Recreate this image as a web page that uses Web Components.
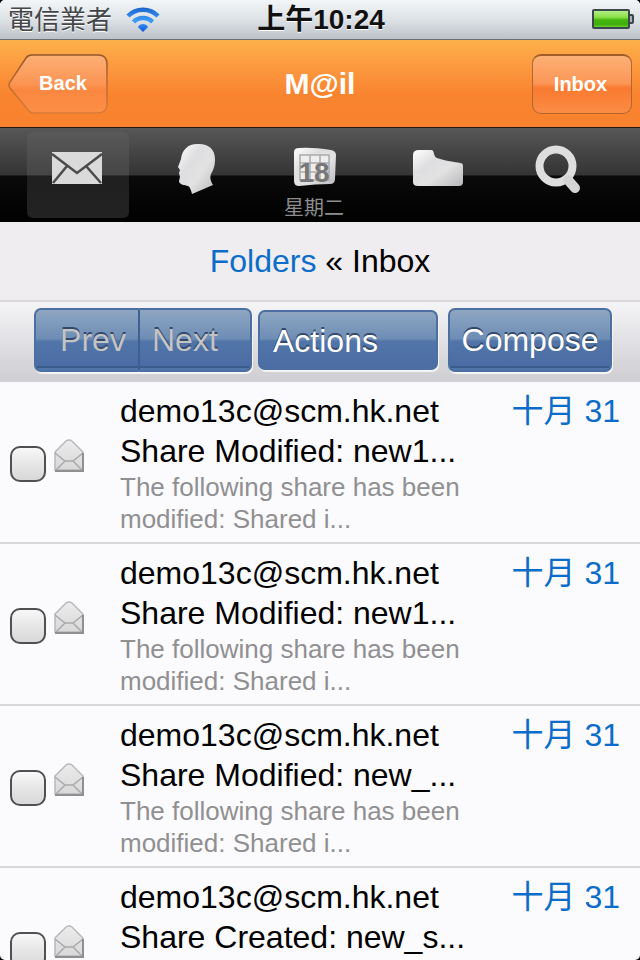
<!DOCTYPE html>
<html lang="zh-Hant">
<head>
<meta charset="utf-8">
<meta name="viewport" content="width=device-width, initial-scale=1">
<title>M@il</title>
<style>
  body {
    margin: 0;
    background: #000;
    font-family: "Liberation Sans", Arial, "Noto Sans CJK TC", sans-serif;
  }
</style>
</head>
<body>

<mail-app>
  <status-bar carrier="電信業者" time="上午10:24"></status-bar>
  <title-bar heading="M@il">
    <nav-button slot="left" shape="arrow">Back</nav-button>
    <nav-button slot="right">Inbox</nav-button>
  </title-bar>
  <tab-bar></tab-bar>
  <folder-path folder="Inbox"></folder-path>
  <tool-bar></tool-bar>
  <message-list slot="content">
    <message-row sender="demo13c@scm.hk.net" subject="Share Modified: new1..." date="十月 31">The following share has been modified: Shared i...</message-row>
    <message-row sender="demo13c@scm.hk.net" subject="Share Modified: new1..." date="十月 31">The following share has been modified: Shared i...</message-row>
    <message-row sender="demo13c@scm.hk.net" subject="Share Modified: new_..." date="十月 31">The following share has been modified: Shared i...</message-row>
    <message-row sender="demo13c@scm.hk.net" subject="Share Created: new_s..." date="十月 31"></message-row>
  </message-list>
</mail-app>

<script>
class MailElement extends HTMLElement {
  constructor() {
    super();
    this.attachShadow({ mode: "open" });
  }

  connectedCallback() {
    this.shadowRoot.innerHTML = /* html */`
      <style>
        * { box-sizing: border-box; }
        ${this.constructor.styles}
      </style>
      ${this.template()}
    `;
  }
}

class MailApp extends MailElement {
  static get styles() {
    return /* css */`
      :host {
        display: flex;
        flex-direction: column;
        height: 100vh;
        overflow: hidden;
        border-radius: 5px;
        background: #fbfafc;
      }
      ::slotted([slot="content"]) {
        flex: 1;
        min-height: 0;
      }
    `;
  }

  template() {
    return /* html */`<slot></slot><slot name="content"></slot>`;
  }
}

class StatusBar extends MailElement {
  static get styles() {
    return /* css */`
      :host {
        display: grid;
        grid-template-columns: 1fr auto 1fr;
        align-items: center;
        box-sizing: border-box;
        height: 40px;
        padding: 0 6px 0 8px;
        background: linear-gradient(#f3f6f8, #dde2e6 50%, #bcc3c8);
        border-bottom: 1px solid #6a6f70;
      }
      .carrier {
        display: flex;
        align-items: center;
        gap: 14px;
        font-size: 26px;
        line-height: 38px;
        color: #444649;
        text-shadow: 0 1px 0 #fff;
      }
      time {
        font-size: 28px;
        font-weight: bold;
        line-height: 38px;
        color: #111;
        text-shadow: 0 1px 0 #fff;
      }
      .battery { justify-self: end; }
      svg { display: block; }
    `;
  }

  template() {
    return /* html */`
      <div class="carrier">
        <span>${this.getAttribute("carrier")}</span>
        <svg width="34" height="26" viewBox="0 0 34 26" role="img" aria-label="Wi-Fi">
          <defs>
            <linearGradient id="wave" x1="0" y1="0" x2="0" y2="26" gradientUnits="userSpaceOnUse">
              <stop offset="0" stop-color="#1a62cc"/>
              <stop offset=".55" stop-color="#3f9df8"/>
              <stop offset="1" stop-color="#0b50dc"/>
            </linearGradient>
          </defs>
          <g fill="none" stroke="url(#wave)" stroke-width="4.500">
            <path d="M2 9a21.200 21.200 0 0 1 30 0"/>
            <path d="M7.500 15a13.400 13.400 0 0 1 19 0"/>
          </g>
          <path fill="url(#wave)" d="M17 25l-4.600-4.600a3.500 3.500 0 0 1 0-1.500 6.500 6.500 0 0 1 9.200 0 3.500 3.500 0 0 1 0 1.500z"/>
        </svg>
      </div>
      <time>${this.getAttribute("time")}</time>
      <svg class="battery" width="42" height="22" viewBox="0 0 42 22" role="img" aria-label="Battery">
        <defs>
          <linearGradient id="charge" x1="0" y1="0" x2="0" y2="1">
            <stop offset="0" stop-color="#b9f08b"/>
            <stop offset=".4" stop-color="#8be04a"/>
            <stop offset=".55" stop-color="#46b50c"/>
            <stop offset=".8" stop-color="#3fae0b"/>
            <stop offset="1" stop-color="#7fdc3e"/>
          </linearGradient>
        </defs>
        <rect x="1" y="1" width="36" height="18" rx="1" fill="url(#charge)" stroke="#3c464e" stroke-width="2"/>
        <path d="M38 6h2q1 0 1 1v6q0 1-1 1h-2" fill="#aab1b5" stroke="#3c464e" stroke-width="2"/>
      </svg>
    `;
  }
}

class TitleBar extends MailElement {
  static get styles() {
    return /* css */`
      :host {
        display: grid;
        grid-template-columns: 1fr auto 1fr;
        align-items: center;
        box-sizing: border-box;
        height: 88px;
        padding: 1px 8px 0;
        background: linear-gradient(#fdb14a, #fc9a40 30%, #f98430 62%, #f8822e);
        border-bottom: 1px solid #241a15;
      }
      h1 {
        margin: 0;
        font-size: 30px;
        line-height: 40px;
        color: #fff;
      }
      slot[name="right"] {
        display: block;
        justify-self: end;
      }
    `;
  }

  template() {
    return /* html */`
      <slot name="left"></slot>
      <h1>${this.getAttribute("heading")}</h1>
      <slot name="right"></slot>
    `;
  }
}

class NavButton extends MailElement {
  static get styles() {
    return /* css */`
      :host { display: block; width: 100px; }
      button {
        display: grid;
        place-items: center;
        width: 100%;
        height: 60px;
        padding: 0 3px 2px 0;
        border: 1px solid #b4662e;
        border-top: 2px solid #a05c2b;
        border-radius: 9px;
        background: linear-gradient(#fdb076, #fb9656 48%, #f97a30 56%, #fb8c45);
        font: bold 20px/24px "Liberation Sans", Arial, sans-serif;
        color: #fff;
      }
      :host([shape="arrow"]) button {
        padding: 0;
        border: 0;
        background: none;
      }
      svg, span { grid-area: 1 / 1; }
      :host([shape="arrow"]) span { padding: 0 0 2px 10px; }
    `;
  }

  template() {
    const arrow = /* html */`
      <svg width="100" height="60" viewBox="0 0 100 60" aria-hidden="true">
        <defs>
          <linearGradient id="face" x1="0" y1="0" x2="0" y2="1">
            <stop offset="0" stop-color="#fdb076"/>
            <stop offset=".5" stop-color="#fb9453"/>
            <stop offset=".6" stop-color="#fa8740"/>
            <stop offset="1" stop-color="#fb8e45"/>
          </linearGradient>
          <linearGradient id="edge" x1="0" y1="0" x2="0" y2="1">
            <stop offset="0" stop-color="#94562c"/>
            <stop offset=".5" stop-color="#bd6a30"/>
            <stop offset="1" stop-color="#d97a38"/>
          </linearGradient>
        </defs>
        <path d="M24 1H90q9 0 9 9V50q0 9-9 9H26q-4 0-6-3L2 34q-2-3 0-6L18 4q2-3 6-3z" fill="url(#face)" stroke="url(#edge)" stroke-width="1.500"/>
      </svg>`;
    return /* html */`
      <button type="button">
        ${this.getAttribute("shape") === "arrow" ? arrow : ""}
        <span><slot></slot></span>
      </button>
    `;
  }
}

class TabBar extends MailElement {
  static get styles() {
    return /* css */`
      :host { display: block; }
      nav {
        display: grid;
        grid-template-columns: repeat(5, 1fr);
        justify-items: center;
        padding: 4px 22px 4px 18px;
        background: linear-gradient(#575757, #343434 50%, #0b0a0b 51%, #000);
      }
      a {
        display: flex;
        flex-direction: column;
        align-items: center;
        width: 102px;
        height: 86px;
        padding-top: 8px;
        border-radius: 6px;
        font-size: 20px;
        line-height: 24px;
        color: #8d8d8d;
        text-decoration: none;
      }
      a[aria-current] { background: linear-gradient(#ffffff08, #ffffff16 50%, #ffffff22); }
      a[href="#calendar"] { padding-right: 8px; }
      svg { display: block; flex: none; }
    `;
  }

  template() {
    return /* html */`
      <svg width="0" height="0" style="position: absolute" aria-hidden="true">
        <defs>
          <linearGradient id="silver" x1="0" y1="0" x2="1" y2="1">
            <stop offset="0" stop-color="#fff"/>
            <stop offset=".35" stop-color="#dedee0"/>
            <stop offset=".6" stop-color="#e2e2e3"/>
            <stop offset="1" stop-color="#b8b8ba"/>
          </linearGradient>
        </defs>
      </svg>
      <nav>
        <a href="#mail" aria-label="Mail" aria-current="page">
          <svg width="56" height="56" viewBox="0 0 56 56">
            <rect x="2" y="12" width="50" height="32" fill="#dadadb"/>
            <path d="M2 14l25 19 25-19M3 43l14-17M51 43L36 26" fill="none" stroke="#4b4b4c" stroke-width="2.500"/>
          </svg>
        </a>
        <a href="#contacts" aria-label="Contacts">
          <svg width="56" height="56" viewBox="0 0 56 56">
            <path fill="url(#silver)" d="M27 4c10-1 18 4 18 15 0 6-1 10-4 15-1 3-1 6 2 11L22 54c-1-4-2-7-4-8-3-1-9-1-9-5l1-4-1-4 1-3-2-3 3-8C12 10 18 4 27 4z"/>
          </svg>
        </a>
        <a href="#calendar">
          <svg width="56" height="56" viewBox="0 0 56 56">
            <path fill="url(#silver)" d="M13 8q13-1 32 2 5 1 5 5l-1 24q0 5-5 5-14 0-31 2-5 0-5-5V12q0-4 5-4z"/>
            <path d="M14 15h29v25H14z" fill="#eee"/>
            <path d="M14 15h29v25H14zM24 15v25M34 15v25M14 23h29M14 32h29" fill="none" stroke="#aaa" stroke-width="1.500"/>
            <text x="28" y="42" text-anchor="middle" font-size="28" font-weight="bold" fill="#777">18</text>
          </svg>
          星期二
        </a>
        <a href="#files" aria-label="Files">
          <svg width="56" height="56" viewBox="0 0 56 56">
            <path fill="url(#silver)" d="M9 10h12c4 0 2 7 6 8 9 3 18 4 23 5q3 0 3 3v16q0 4-4 4H8q-5 0-5-4V15q0-5 6-5z"/>
          </svg>
        </a>
        <a href="#search" aria-label="Search">
          <svg width="56" height="56" viewBox="0 0 56 56">
            <circle cx="26" cy="26" r="16.500" fill="none" stroke="#dededf" stroke-width="8"/>
            <path d="M38 40l7 8" stroke="#d4d4d5" stroke-width="10" stroke-linecap="round"/>
          </svg>
        </a>
      </nav>
    `;
  }
}

class FolderPath extends MailElement {
  static get styles() {
    return /* css */`
      :host {
        display: block;
        padding: 19px 0;
        border-bottom: 2px solid #d9d8da;
        background: #efedef;
        font-size: 32px;
        line-height: 40px;
        text-align: center;
        color: #000;
      }
      a {
        color: #0b6dc9;
        text-decoration: none;
      }
    `;
  }

  template() {
    return /* html */`<a href="#folders">Folders</a> « ${this.getAttribute("folder")}`;
  }
}

class ToolBar extends MailElement {
  static get styles() {
    return /* css */`
      :host {
        display: flex;
        align-items: center;
        box-sizing: border-box;
        height: 80px;
        padding: 0 28px 2px 34px;
        border-bottom: 2px solid #d2d1d5;
        background: linear-gradient(#f5f5f7, #dddce0 60%, #cfced2);
      }
      button, select {
        height: 64px;
        margin: 0;
        border: 2px solid #4b6fa0;
        border-radius: 7px;
        background: linear-gradient(#8ea6c2, #6e8db5 48%, #5175a9 52%, #4b6ca4 94%, #3b5b8b 94%, #3b5b8b 97%, #5276aa 97%);
        box-shadow: 1px 2px 0 #f4f4f6;
        font: 32px/40px "Liberation Sans", Arial, sans-serif;
        color: #fff;
        text-shadow: 0 -2px 0 #34486a;
      }
      .pager {
        display: flex;
        margin-right: 6px;
      }
      .pager button { color: #c3c4c6; }
      .prev {
        width: 104px;
        padding: 0 12px 0 24px;
        border-right-width: 0;
        border-radius: 7px 0 0 7px;
      }
      .next {
        width: 114px;
        padding: 0 12px;
        border-left-color: #3d5f91;
        border-radius: 0 7px 7px 0;
        text-align: left;
      }
      select {
        flex: 1;
        min-width: 0;
        height: 60px;
        margin-right: 10px;
        padding: 2px 13px 0;
        appearance: none;
        background: linear-gradient(#8ea6c2, #6e8db5 48%, #5175a9 52%, #4b6ca4);
      }
      .compose {
        width: 164px;
        padding: 0;
      }
    `;
  }

  template() {
    return /* html */`
      <div class="pager">
        <button class="prev" type="button" disabled>Prev</button>
        <button class="next" type="button" disabled>Next</button>
      </div>
      <select aria-label="Actions"><option>Actions</option></select>
      <button class="compose" type="button">Compose</button>
    `;
  }
}

class MessageList extends MailElement {
  static get styles() {
    return /* css */`
      :host {
        display: block;
        overflow-y: auto;
        scrollbar-width: none;
      }
    `;
  }

  template() {
    return /* html */`<slot></slot>`;
  }
}

class MessageRow extends MailElement {
  static get styles() {
    return /* css */`
      :host {
        display: grid;
        grid-template-columns: 36px 32px 1fr auto;
        align-items: start;
        box-sizing: border-box;
        min-height: 162px;
        padding: 9px 20px 7px 10px;
        border-bottom: 2px solid #d8d7db;
        color: #000;
      }
      input {
        appearance: none;
        width: 36px;
        height: 36px;
        margin: 55px 0 0;
        border: 2px solid #505052;
        border-radius: 10px;
        background: linear-gradient(#f8f8f8, #e6e6e6 50%, #d8d8d8);
      }
      svg {
        display: block;
        margin: 48px 0 0 8px;
      }
      label {
        display: block;
        padding-left: 42px;
        font-size: 32px;
        line-height: 40px;
      }
      label span { display: block; }
      .preview {
        max-width: 360px;
        font-size: 26px;
        line-height: 32px;
        color: #909092;
      }
      time {
        font-size: 32px;
        line-height: 40px;
        color: #0b6dc9;
      }
    `;
  }

  template() {
    return /* html */`
      <input type="checkbox" id="pick">
      <svg width="30" height="34" viewBox="0 0 30 34" aria-hidden="true">
        <defs>
          <linearGradient id="paper" x1="0" y1="0" x2="0" y2="1">
            <stop offset="0" stop-color="#ececed"/>
            <stop offset="1" stop-color="#d8d8d9"/>
          </linearGradient>
        </defs>
        <path d="M1 13L12 2q3-2 6 0l11 11v18H1z" fill="url(#paper)" stroke="#b9b9bb" stroke-width="1.500"/>
        <path d="M1 14l10 8h8l10-8M2 31l9-9M28 31l-9-9" fill="none" stroke="#a9a9ac" stroke-width="1.500"/>
        <path d="M1 32h28V14" fill="none" stroke="#8f8f92" stroke-width="2"/>
      </svg>
      <label for="pick">
        <span>${this.getAttribute("sender")}</span>
        <span>${this.getAttribute("subject")}</span>
        <span class="preview"><slot></slot></span>
      </label>
      <time>${this.getAttribute("date")}</time>
    `;
  }
}

customElements.define("mail-app", MailApp);
customElements.define("status-bar", StatusBar);
customElements.define("title-bar", TitleBar);
customElements.define("nav-button", NavButton);
customElements.define("tab-bar", TabBar);
customElements.define("folder-path", FolderPath);
customElements.define("tool-bar", ToolBar);
customElements.define("message-list", MessageList);
customElements.define("message-row", MessageRow);
</script>
</body>
</html>
